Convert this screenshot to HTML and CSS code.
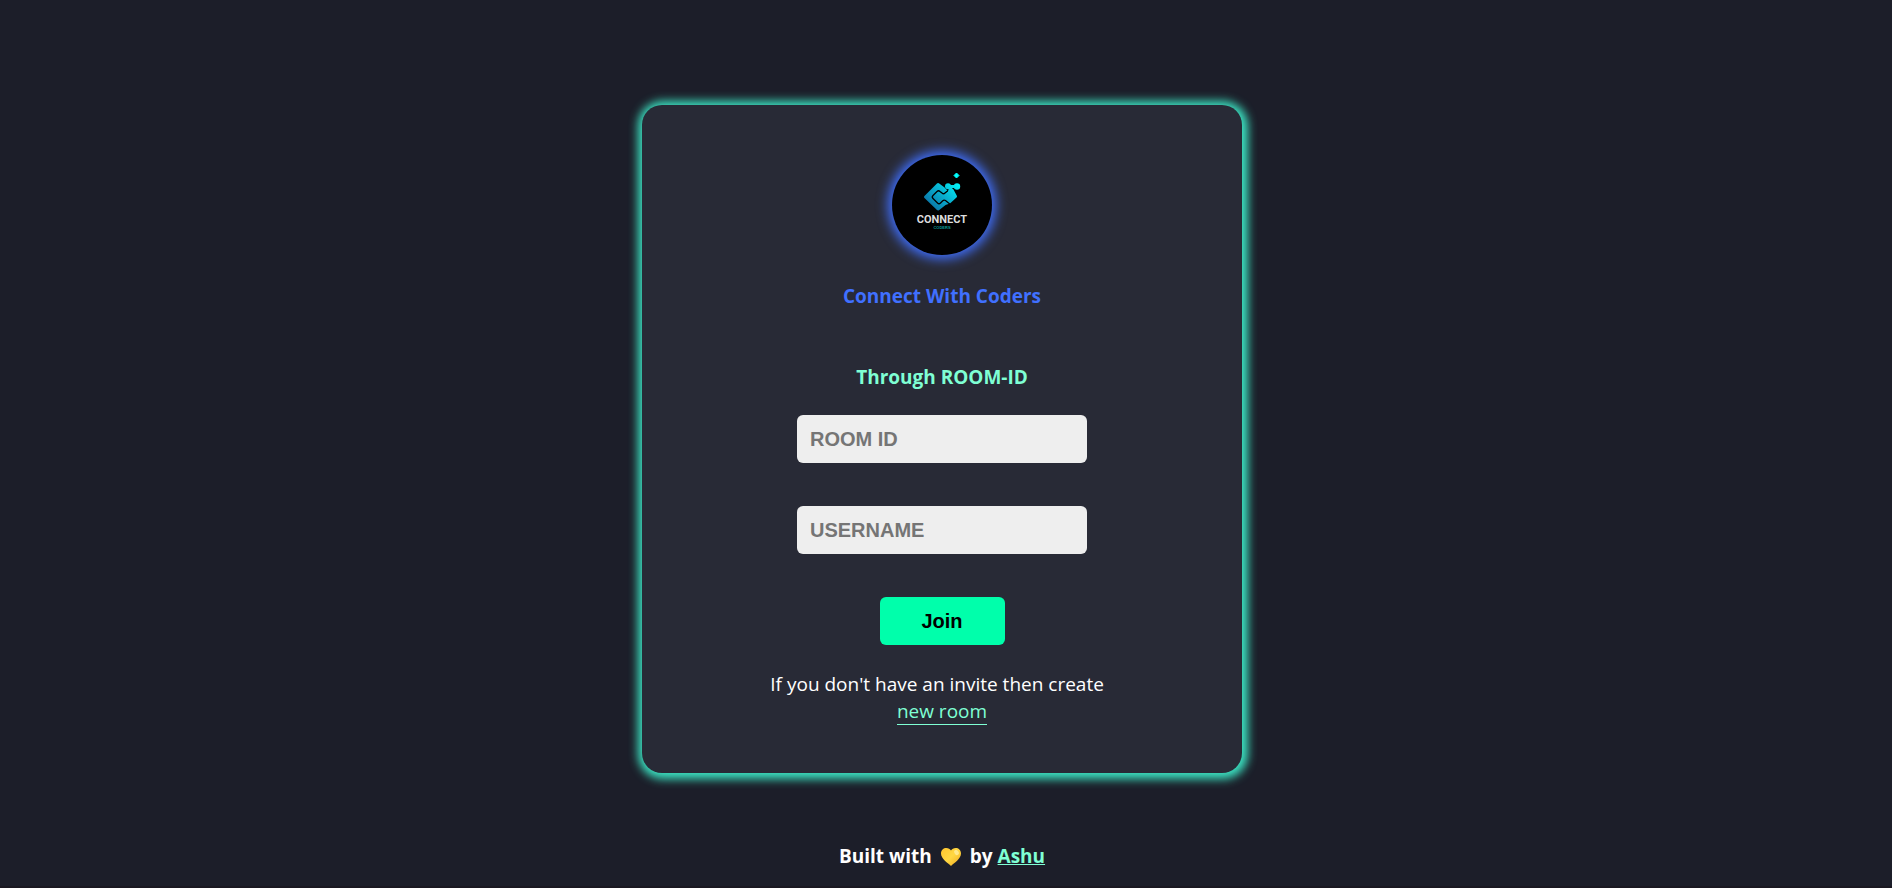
FILE: index.html
```html
<!DOCTYPE html>
<html lang="en">
<head>
<meta charset="utf-8">
<meta name="viewport" content="width=device-width, initial-scale=1">
<title>Connect With Coders</title>
<link rel="stylesheet" href="styles.css">
</head>
<body>
<main class="page">
  <form class="card">
    <svg class="logo" viewBox="0 0 100 100" role="img" aria-label="Connect Coders">
      <defs>
        <linearGradient id="mark" gradientUnits="userSpaceOnUse" x1="36" y1="54" x2="66" y2="24">
          <stop offset="0" stop-color="#0b6a9f"/>
          <stop offset=".5" stop-color="#08b0d0"/>
          <stop offset="1" stop-color="#0ff"/>
        </linearGradient>
      </defs>
      <g fill="url(#mark)" stroke="url(#mark)" stroke-width="3" stroke-linejoin="round">
        <path d="M46 29.500L52 34 55 37 60 35 63.500 41.500 57.500 47 53 48.500 46 54 33.500 42Z"/>
      </g>
      <path d="M59 50L53.500 45.500Q52 44.500 50.500 46L48.500 48Q47 49.500 45.500 48L41 43.500Q39.500 42 41 40.500L45 36.500Q46.500 35 48 36.500L50 38Q51.500 39.500 53 38L55.500 36Q56.500 35 55 33.500L53 31" fill="none" stroke="#000" stroke-width="1.300"/>
      <g fill="url(#mark)">
        <path d="M64.500 18L67 20.500 64.500 23 62 20.500Z" stroke="#0ff" stroke-linejoin="round"/>
        <circle cx="56" cy="31.300" r="3"/>
        <circle cx="65" cy="31.500" r="3.200"/>
        <path d="M56 30H65.500V33H60L61 37 57 37Z"/>
      </g>
      <text class="logo-name" x="50" y="68" text-anchor="middle">CONNECT</text>
      <text class="logo-sub" x="50" y="74" text-anchor="middle">CODERS</text>
    </svg>
    <h1 class="title">Connect With Coders</h1>
    <h2 class="subtitle">Through ROOM-ID</h2>
    <div class="fields">
      <input class="field" type="text" placeholder="ROOM ID" aria-label="Room ID">
      <input class="field" type="text" placeholder="USERNAME" aria-label="Username">
      <button class="join" type="button">Join</button>
    </div>
    <p class="invite">If you don't have an invite then create &nbsp;<br><a class="new-room" href="#">new room</a></p>
  </form>
  <footer class="footer">
    <span>Built with</span>
    <svg class="heart" viewBox="0 0 20 18" role="img" aria-label="love">
      <defs>
        <linearGradient id="gold" x1="0" y1="0" x2="1" y2="1">
          <stop offset="0" stop-color="#ffc52e"/>
          <stop offset=".5" stop-color="#ffd843"/>
          <stop offset="1" stop-color="#f0a81e"/>
        </linearGradient>
      </defs>
      <path d="M10 18C7 15 0 11 0 5.500 0 2 2.500 0 5.300 0 7.500 0 9 1 10 2.500 11 1 12.500 0 14.700 0 17.500 0 20 2 20 5.500 20 11 13 15 10 18Z" fill="url(#gold)"/>
      <ellipse cx="15.500" cy="4.500" rx="2" ry="2.800" transform="rotate(-35 15.500 4.500)" fill="#ffe98c"/>
    </svg>
    <span>by <a class="author" href="#">Ashu</a></span>
  </footer>
</main>
</body>
</html>
```
FILE: styles.css
```css
* {
  box-sizing: border-box;
}

body {
  margin: 0;
  background: #1c1e29;
  color: #fff;
  font-family: "Segoe UI", "Open Sans", "Noto Sans", sans-serif;
  font-size: 19px;
  line-height: 27px;
}

.page {
  display: flex;
  flex-direction: column;
  align-items: center;
  min-height: 100vh;
  padding: 105px 8px 16px 0;
  border-bottom: 2px solid #1a1821;
}

.card {
  display: flex;
  flex-direction: column;
  align-items: center;
  width: 100%;
  max-width: 600px;
  padding: 50px 50px 48px;
  border-radius: 20px;
  background: #282a36;
  box-shadow: 1px 1px 10px 5px #3ce4c3;
}

.logo {
  width: 100px;
  height: 100px;
  border-radius: 50%;
  background: #000;
  box-shadow: 0 0 12px 4px #4070ff;
}

.logo-name {
  fill: #ddd;
  font-family: Roboto, "Liberation Sans", sans-serif;
  font-size: 11px;
  font-weight: 700;
}

.logo-sub {
  fill: #0a9c96;
  font-family: "Liberation Sans", sans-serif;
  font-size: 4px;
  font-weight: 700;
}

.title,
.subtitle {
  margin: 28px 0 27px;
  font-size: 19px;
  font-weight: 700;
}

.title {
  color: #4070ff;
}

.subtitle {
  margin: 27px 0 24px;
  color: #7fffd4;
}

.fields {
  display: flex;
  flex-direction: column;
  align-items: center;
  gap: 43px;
  width: 100%;
}

.field,
.join {
  height: 48px;
  border: 0;
  border-radius: 6px;
  font-family: "Liberation Sans", Arial, sans-serif;
  font-size: 20px;
  font-weight: 700;
}

.field {
  width: 100%;
  max-width: 290px;
  padding: 0 13px;
  background: #eee;
  color: #000;
}

.field::placeholder {
  color: #757575;
  opacity: 1;
}

.join {
  width: 125px;
  background: #00ffab;
  color: #000;
}

.invite {
  margin: 26px 0 0;
  text-align: center;
}

.new-room {
  border-bottom: 1px solid #7fffd4;
  color: #7fffd4;
  text-decoration: none;
}

.footer {
  display: flex;
  align-items: center;
  gap: 9px;
  margin-top: 70px;
  font-weight: 700;
}

.heart {
  width: 20px;
  height: 18px;
}

.author {
  color: #7fffd4;
}
```
